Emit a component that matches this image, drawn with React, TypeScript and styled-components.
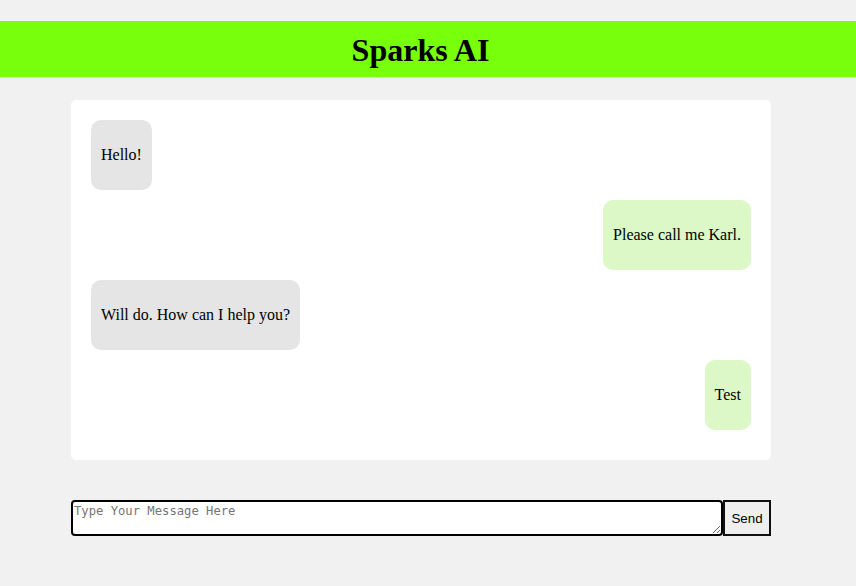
import styled, { createGlobalStyle } from 'styled-components'

const GlobalStyle = createGlobalStyle`
  body {
    margin: 0;
    background: #f1f1f1;
    font-family: "Liberation Serif", "Times New Roman", serif;
  }
`;

const Header = styled.h1`
  margin: 21px 0;
  padding: 11px 15px 8px 0;
  background: #77ff0b;
  text-align: center;
  font-size: 32px;
  font-weight: 700;
  line-height: 37px;
  color: #000;
`;

const Main = styled.div`
  width: 700px;
  margin: 0 0 0 71px;
`;

const ChatBox = styled.div`
  display: flex;
  flex-direction: column;
  gap: 10px;
  margin-top: 23px;
  padding: 20px 20px 30px;
  background: #fff;
  border-radius: 5px;
`;

const Bubble = styled.div<{ $mine?: boolean }>`
  align-self: ${p => (p.$mine ? 'flex-end' : 'flex-start')};
  padding: 10px;
  border-radius: 10px;
  background: ${p => (p.$mine ? '#dcf8c6' : '#e5e5e5')};
  font-size: 16px;
`;

const BubbleText = styled.p`
  margin: 16px 0;
  line-height: 18px;
`;

const InputRow = styled.form`
  display: flex;
  margin-top: 40px;
`;

const MessageInput = styled.textarea`
  flex: 1;
  box-sizing: border-box;
  height: 36px;
  margin: 0;
  padding: 2px 1px;
  border: 2px solid #000;
  border-radius: 4px;
  font-family: "DejaVu Sans Mono", monospace;
  font-size: 12.2px;
  line-height: 15px;

  &::placeholder {
    color: #757575;
  }
`;

const SendButton = styled.button`
  box-sizing: border-box;
  width: 48px;
  height: 36px;
  margin: 0;
  padding: 0;
  border: 2px solid #111;
  background: #efefef;
  font-family: "Liberation Sans", Arial, sans-serif;
  font-size: 13.33px;
  color: #000;
`;

const messages = [
  { text: 'Hello!', mine: false },
  { text: 'Please call me Karl.', mine: true },
  { text: 'Will do. How can I help you?', mine: false },
  { text: 'Test', mine: true },
];

const App = () => {
  return (
    <>
      <GlobalStyle />
      <Header>Sparks AI</Header>
      <Main>
        <ChatBox>
          {messages.map((m, i) => (
            <Bubble key={i} $mine={m.mine}>
              <BubbleText>{m.text}</BubbleText>
            </Bubble>
          ))}
        </ChatBox>
        <InputRow onSubmit={e => e.preventDefault()}>
          <MessageInput placeholder="Type Your Message Here" />
          <SendButton type="submit">Send</SendButton>
        </InputRow>
      </Main>
    </>
  )
}

export default App
